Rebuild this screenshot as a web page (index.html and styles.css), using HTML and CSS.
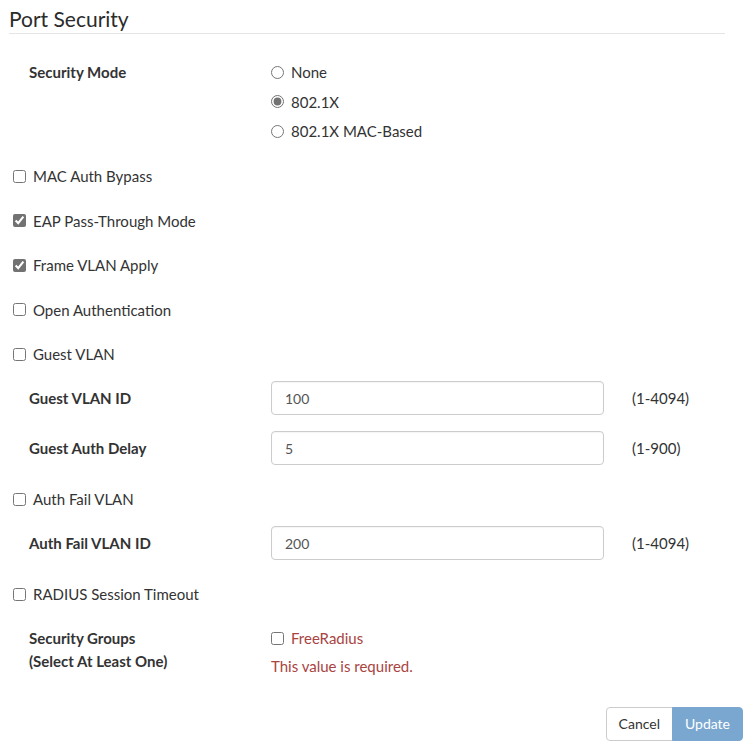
FILE: index.html
```html
<!DOCTYPE html>
<html lang="en">
<head>
<meta charset="utf-8">
<title>Port Security</title>
<link rel="stylesheet" href="styles.css">
</head>
<body>
<div class="page">
  <h1 class="title">Port Security</h1>
  <form class="form">
    <div class="mode-group">
      <div class="field-label">Security Mode</div>
      <div class="radio-list">
        <label class="opt"><input type="radio" name="mode"><span>None</span></label>
        <label class="opt"><input type="radio" name="mode" class="gray" checked><span>802.1X</span></label>
        <label class="opt"><input type="radio" name="mode"><span>802.1X MAC-Based</span></label>
      </div>
    </div>

    <label class="cb-row first"><input type="checkbox"><span>MAC Auth Bypass</span></label>
    <label class="cb-row"><input type="checkbox" class="gray" checked><span>EAP Pass-Through Mode</span></label>
    <label class="cb-row"><input type="checkbox" class="gray" checked><span>Frame VLAN Apply</span></label>
    <label class="cb-row"><input type="checkbox"><span>Open Authentication</span></label>
    <label class="cb-row"><input type="checkbox"><span>Guest VLAN</span></label>

    <div class="field-row">
      <div class="field-label">Guest VLAN ID</div>
      <input class="text-input" type="text" value="100">
      <div class="hint">(1-4094)</div>
    </div>
    <div class="field-row">
      <div class="field-label">Guest Auth Delay</div>
      <input class="text-input" type="text" value="5">
      <div class="hint">(1-900)</div>
    </div>

    <label class="cb-row"><input type="checkbox"><span>Auth Fail VLAN</span></label>

    <div class="field-row">
      <div class="field-label">Auth Fail VLAN ID</div>
      <input class="text-input" type="text" value="200">
      <div class="hint">(1-4094)</div>
    </div>

    <label class="cb-row"><input type="checkbox"><span>RADIUS Session Timeout</span></label>

    <div class="groups-row">
      <div class="field-label two-line">Security Groups<br>(Select At Least One)</div>
      <div class="groups-value">
        <label class="opt error"><input type="checkbox"><span>FreeRadius</span></label>
        <div class="error-msg">This value is required.</div>
      </div>
    </div>

    <div class="actions">
      <div class="btn-group">
        <button type="button" class="btn btn-default">Cancel</button>
        <button type="button" class="btn btn-primary" disabled>Update</button>
      </div>
    </div>
  </form>
</div>
</body>
</html>
```

FILE: styles.css
```css
* { box-sizing: border-box; }

html, body {
  margin: 0;
  padding: 0;
  background: #fff;
}

body {
  font-family: Lato, "Open Sans", "Liberation Sans", sans-serif;
  font-size: 15px;
  line-height: 20px;
  color: #333;
}

.page {
  width: 756px;
}

.title {
  margin: 7px 31px 0 9px;
  padding: 0 0 2px 0;
  font-size: 21px;
  font-weight: 400;
  line-height: 24px;
  color: #2b2b2b;
  border-bottom: 1px solid #e5e5e5;
}

.form {
  display: flex;
  flex-direction: column;
}

.field-label {
  width: 242px;
  font-weight: 700;
  color: #333;
}

.mode-group {
  display: flex;
  margin-top: 28px;
  padding-left: 29px;
}

.radio-list {
  display: flex;
  flex-direction: column;
  gap: 9.5px;
}

.opt {
  display: flex;
  align-items: center;
  height: 20px;
  gap: 7px;
  cursor: pointer;
}

.opt input,
.cb-row input {
  width: 13px;
  height: 13px;
  margin: 0;
  flex: none;
}

input.gray {
  accent-color: #727272;
}

.cb-row {
  display: flex;
  align-items: center;
  gap: 7px;
  height: 20px;
  margin-top: 24.5px;
  padding-left: 13px;
  cursor: pointer;
}

.cb-row.first {
  margin-top: 25px;
}

.field-row + .cb-row {
  margin-top: 24px;
}

.field-row {
  display: flex;
  align-items: center;
  height: 34px;
  margin-top: 16px;
  padding-left: 29px;
}

.cb-row + .field-row {
  margin-top: 17px;
}

.text-input {
  width: 333px;
  height: 34px;
  padding: 6px 13px;
  border: 1px solid #ccc;
  border-radius: 4px;
  font-family: inherit;
  font-size: 14px;
  color: #555;
  background: #fff;
  box-shadow: inset 0 1px 1px rgba(0, 0, 0, 0.04);
}

.hint {
  margin-left: 28px;
  color: #333;
}

.groups-row {
  display: flex;
  margin-top: 22.5px;
  padding-left: 29px;
}

.field-label.two-line {
  line-height: 23px;
}

.groups-value {
  display: flex;
  flex-direction: column;
  padding-top: 1.5px;
}

.opt.error {
  color: #a94442;
}

.error-msg {
  margin-top: 8px;
  color: #a94442;
}

.actions {
  display: flex;
  justify-content: flex-end;
  margin-top: 31px;
  padding-right: 13px;
}

.btn-group {
  display: flex;
}

.btn {
  height: 34px;
  padding: 6px 12px;
  font-family: inherit;
  font-size: 14px;
  line-height: 20px;
  border: 1px solid transparent;
  cursor: pointer;
}

.btn-default {
  background: #fff;
  color: #333;
  border-color: #ccc;
  border-radius: 4px 0 0 4px;
}

.btn-primary {
  background: #7aa7d0;
  border-color: #7aa7d0;
  color: #fff;
  border-radius: 0 4px 4px 0;
  margin-left: -1px;
  cursor: not-allowed;
}
```
